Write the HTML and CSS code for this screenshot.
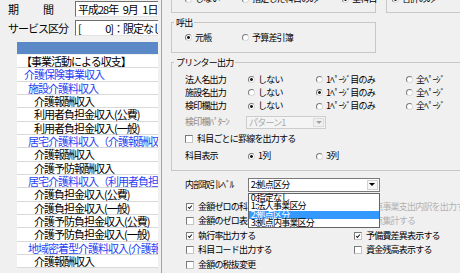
FILE: index.html
```html
<!DOCTYPE html>
<html lang="ja">
<head>
  <meta charset="UTF-8">
  <title>予算管理</title>
  <link rel="stylesheet" href="styles.css">
</head>
<body>
  <div class="screen">
    <div class="side">
      <div class="field">
        <span class="field-label term"><span>期</span><span>間</span></span>
        <div class="input">平成28年&ensp;9月&ensp;1日</div>
      </div>
      <div class="field">
        <span class="field-label">サービス区分</span>
        <div class="input">[　　&ensp;0]：限定なし</div>
      </div>
      <div class="grid">
        <div class="grid-head"></div>
        <div class="row lv0">【事業活動による収支】</div>
        <div class="row lv1">介護保険事業収入</div>
        <div class="row lv2">施設介護料収入</div>
        <div class="row lv3">介護報酬収入</div>
        <div class="row lv3">利用者負担金収入(公費)</div>
        <div class="row lv3">利用者負担金収入(一般)</div>
        <div class="row lv2">居宅介護料収入（介護報酬収入）</div>
        <div class="row lv3">介護報酬収入</div>
        <div class="row lv3">介護予防報酬収入</div>
        <div class="row lv2">居宅介護料収入（利用者負担金収入）</div>
        <div class="row lv3">介護負担金収入(公費)</div>
        <div class="row lv3">介護負担金収入(一般)</div>
        <div class="row lv3">介護予防負担金収入(公費)</div>
        <div class="row lv3">介護予防負担金収入(一般)</div>
        <div class="row lv2">地域密着型介護料収入(介護報酬収入)</div>
        <div class="row lv3">介護報酬収入</div>
      </div>
    </div>
    <div class="splitter"></div>
    <div class="panel">
      <div class="top-groups">
        <div class="top-box first">
          <div class="opts">
            <label class="opt"><i class="radio"></i>しない</label>
            <label class="opt"><i class="radio"></i>指定した科目のみ</label>
            <label class="opt"><i class="radio on"></i>全科目</label>
          </div>
        </div>
        <div class="top-box second">
          <div class="opts">
            <label class="opt"><i class="radio on"></i>合計のみ</label>
          </div>
        </div>
      </div>

      <fieldset class="group call">
        <legend>呼出</legend>
        <div class="opts">
          <label class="opt"><i class="radio on"></i>元帳</label>
          <label class="opt"><i class="radio"></i>予算差引簿</label>
        </div>
      </fieldset>

      <fieldset class="group printer">
        <legend>プリンター出力</legend>
        <div class="prow first">
          <span>法人名出力</span>
          <label class="opt"><i class="radio on"></i>しない</label>
          <label class="opt"><i class="radio"></i>1ﾍﾟｰｼﾞ目のみ</label>
          <label class="opt"><i class="radio"></i>全ﾍﾟｰｼﾞ</label>
        </div>
        <div class="prow">
          <span>施設名出力</span>
          <label class="opt"><i class="radio"></i>しない</label>
          <label class="opt"><i class="radio on"></i>1ﾍﾟｰｼﾞ目のみ</label>
          <label class="opt"><i class="radio"></i>全ﾍﾟｰｼﾞ</label>
        </div>
        <div class="prow">
          <span>検印欄出力</span>
          <label class="opt"><i class="radio on"></i>しない</label>
          <label class="opt"><i class="radio"></i>1ﾍﾟｰｼﾞ目のみ</label>
          <label class="opt"><i class="radio"></i>全ﾍﾟｰｼﾞ</label>
        </div>
        <div class="pattern-row">
          <span class="plabel dim">検印欄ﾊﾟﾀｰﾝ</span>
          <div class="combo disabled">
            <span class="combo-text">パターン1</span>
            <span class="combo-btn"><i class="arrow"></i></span>
          </div>
        </div>
        <label class="check-row opt"><i class="check"></i>科目ごとに罫線を出力する</label>
        <div class="prow display">
          <span>科目表示</span>
          <label class="opt"><i class="radio on"></i>1列</label>
          <label class="opt"><i class="radio"></i>3列</label>
        </div>
      </fieldset>

      <div class="lower">
        <div class="level-row">
          <span class="plabel">内部取引ﾚﾍﾞﾙ</span>
          <div class="combo-wrap">
            <div class="combo">
              <span class="combo-text">2:拠点区分</span>
              <span class="combo-btn"><i class="arrow"></i></span>
            </div>
            <div class="list">
              <div>0:指定なし</div>
              <div>1:法人事業区分</div>
              <div class="sel">2:拠点区分</div>
              <div>3:拠点内事業区分</div>
            </div>
          </div>
        </div>
        <div class="checks">
          <label class="opt"><i class="check on"><svg viewBox="0 0 8 8"><polyline points="1.5,4 3.3,5.8 6.5,2"/></svg></i>金額ゼロの科目を印刷しない</label>
          <label class="opt dim-light"><i class="check"></i>拠点事業支出内訳を出力する</label>
          <label class="opt"><i class="check"></i>金額のゼロ表示をする</label>
          <label class="opt dim-light"><i class="check"></i>拠点集計する</label>
          <label class="opt"><i class="check on"><svg viewBox="0 0 8 8"><polyline points="1.5,4 3.3,5.8 6.5,2"/></svg></i>執行率出力する</label>
          <label class="opt"><i class="check on"><svg viewBox="0 0 8 8"><polyline points="1.5,4 3.3,5.8 6.5,2"/></svg></i>予備費差異表示する</label>
          <label class="opt"><i class="check"></i>科目コード出力する</label>
          <label class="opt"><i class="check"></i>資金残高表示する</label>
          <label class="opt"><i class="check"></i>金額の税抜変更</label>
        </div>
      </div>
    </div>
  </div>
</body>
</html>
```

FILE: styles.css
```css
html, body {
  margin: 0;
}
body {
  width: 460px;
  height: 273px;
  overflow: hidden;
  background: #f0f0f0;
  color: #000;
  font-family: "Noto Sans CJK JP", sans-serif;
}
.screen {
  display: flex;
  height: 273px;
}

/* left side */
.side {
  width: 150px;
  flex: none;
  padding: 1px 0 0 8px;
  overflow: hidden;
  font-size: 11px;
  letter-spacing: -1px;
}
.field {
  display: flex;
  align-items: center;
  height: 16px;
  margin-bottom: 3px;
  white-space: nowrap;
}
.field-label {
  width: 67px;
  flex: none;
}
.term {
  display: flex;
  justify-content: space-between;
  width: 45px;
  margin-right: 22px;
}
.input {
  flex: none;
  width: 110px;
  height: 16px;
  box-sizing: border-box;
  padding-left: 2px;
  line-height: 14px;
  background: #fff;
  border: 1px solid;
  border-color: #6f6f6f #e3e3e3 #e3e3e3 #6f6f6f;
}
.grid {
  width: 160px;
  margin: 6px 0 0 9px;
}
.grid-head {
  height: 12px;
  margin-bottom: 1px;
  background: #5b88c6;
}
.row {
  height: 13.33px;
  box-sizing: border-box;
  line-height: 12.33px;
  background: #fff;
  border-bottom: 1px solid #d9d9d9;
  white-space: nowrap;
}
.lv0 { padding-left: 4px; }
.lv1 { padding-left: 7px; color: #2a3ff5; }
.lv2 { padding-left: 11px; color: #2a3ff5; }
.lv3 { padding-left: 17px; }

.splitter {
  width: 3px;
  flex: none;
  border-right: 1px solid #a4a4a4;
}

/* right panel */
.panel {
  flex: 1;
  min-width: 0;
  padding-left: 9px;
  overflow: hidden;
  font-size: 9px;
  letter-spacing: -0.8px;
  line-height: 12px;
}
.opt {
  display: inline-flex;
  align-items: center;
  white-space: nowrap;
}
.radio {
  width: 7px;
  height: 7px;
  flex: none;
  box-sizing: border-box;
  margin-right: 3px;
  border: 1px solid;
  border-color: #7b7b7b #dadada #dadada #7b7b7b;
  border-radius: 50%;
  background: #fff;
}
.radio.on {
  background: radial-gradient(circle, #1a1a1a 0 1.2px, #fff 1.6px);
}
.check {
  display: inline-flex;
  width: 8px;
  height: 8px;
  flex: none;
  box-sizing: border-box;
  margin-right: 4px;
  border: 1px solid;
  border-color: #7a7a7a #c4c4c4 #c4c4c4 #7a7a7a;
  background: #fff;
}
.check svg {
  width: 6px;
  height: 6px;
  fill: none;
  stroke: #1a1a1a;
  stroke-width: 1.4;
}

.top-groups {
  display: flex;
  height: 13px;
}
.top-box {
  height: 13px;
  box-sizing: border-box;
  border: 1px solid #c8c8c8;
  border-top: 0;
}
.top-box.first {
  width: 205px;
  padding-left: 13px;
}
.top-box.second {
  width: 120px;
  margin-left: 10px;
  padding-left: 5px;
}
.top-box .opts {
  margin-top: -7px;
}
.opts {
  display: grid;
  grid-template-columns: 57px 100px auto;
}

.group {
  min-width: 0;
  margin: 4px 0 0;
  padding: 0 0 8px 13px;
  border: 1px solid #c8c8c8;
}
.group legend {
  margin-left: -11px;
  padding: 0 2px;
  line-height: 11px;
}
.call {
  width: 205px;
  box-sizing: border-box;
}
.call .opts {
  margin-top: 3.5px;
}
.printer {
  width: 320px;
  box-sizing: border-box;
  margin-top: 4.5px;
  padding-bottom: 7px;
}
.prow {
  display: grid;
  grid-template-columns: 63px 68px 90px auto;
  align-items: center;
  height: 13.33px;
  white-space: nowrap;
}
.prow.first {
  margin-top: 5px;
}
.prow.display {
  margin-top: 3.7px;
}
.pattern-row {
  display: flex;
  align-items: center;
  height: 13px;
  margin-top: 3px;
}
.plabel {
  flex: none;
  white-space: nowrap;
}
.pattern-row .plabel {
  width: 61px;
}
.dim {
  color: #8a8a8a;
}
.check-row {
  display: flex;
  height: 13px;
  margin-top: 4px;
}

.combo {
  display: flex;
  align-items: stretch;
  height: 14px;
  box-sizing: border-box;
  border: 1px solid #7a7a7a;
  background: #fff;
}
.combo-text {
  flex: 1;
  padding-left: 2px;
  line-height: 12px;
  white-space: nowrap;
}
.combo-btn {
  display: flex;
  align-items: center;
  justify-content: center;
  width: 11px;
  margin: 1px;
  box-sizing: border-box;
  border: 1px solid #d2d2d2;
  background: #f6f6f6;
}
.arrow {
  width: 0;
  height: 0;
  border-left: 3px solid transparent;
  border-right: 3px solid transparent;
  border-top: 3px solid #000;
}
.combo.disabled {
  width: 80px;
  height: 13px;
  border-color: #cdcdcd;
  background: #f4f4f4;
  color: #a8a8a8;
}
.combo.disabled .combo-text {
  line-height: 11px;
}
.combo.disabled .combo-btn {
  background: #f0f0f0;
  border-color: #dadada;
}
.combo.disabled .arrow {
  border-top-color: #a0a0a0;
}

.lower {
  padding-left: 14px;
}
.level-row {
  display: flex;
  align-items: center;
  height: 14px;
  margin-top: 6.7px;
}
.level-row .plabel {
  width: 62.7px;
}
.combo-wrap {
  position: relative;
  width: 132px;
}
.list {
  position: absolute;
  left: 0;
  top: 15px;
  z-index: 1;
  width: 132px;
  height: 35px;
  box-sizing: border-box;
  border: 1px solid #646464;
  background: #fff;
}
.list div {
  height: 8.6px;
  padding-left: 2px;
  line-height: 8.6px;
  white-space: nowrap;
}
.list .sel {
  background: #3399ff;
  color: #fff;
}
.checks {
  display: grid;
  grid-template-columns: 168px auto;
  grid-auto-rows: 14.6px;
  align-items: center;
  margin: 7.7px 0 0 1px;
}
.dim-light {
  color: #b2b2b2;
}
.dim-light .check {
  border-color: #c6c6c6;
  background: #f4f4f4;
}
```
